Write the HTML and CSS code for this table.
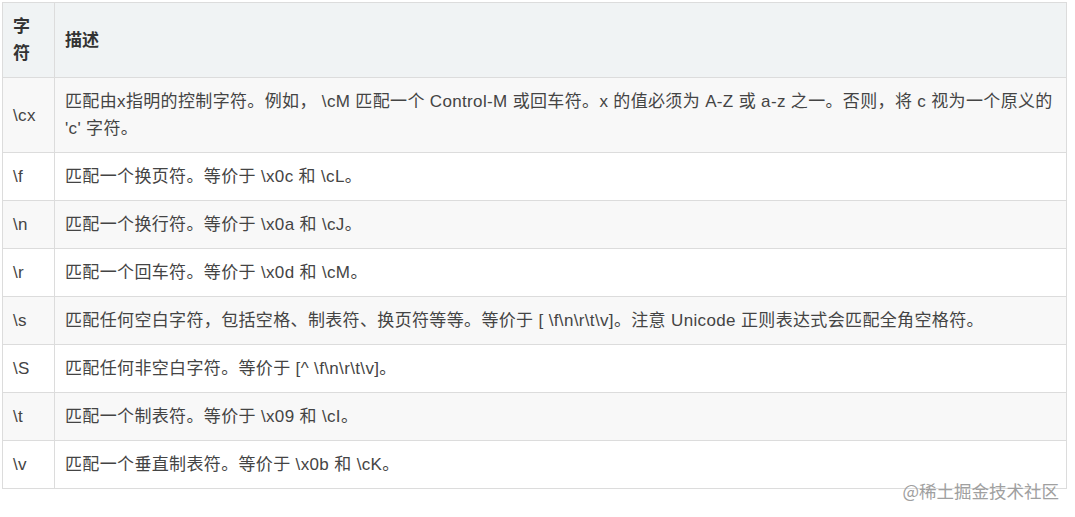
FILE: index.html
```html
<!DOCTYPE html>
<html lang="zh">
<head>
<meta charset="utf-8">
<link rel="stylesheet" href="styles.css">
</head>
<body>
<div class="wrap">
<table class="regex">
<thead>
<tr><th class="c1">字符</th><th>描述</th></tr>
</thead>
<tbody>
<tr><td class="c1">\cx</td><td>匹配由x指明的控制字符。例如， \cM 匹配一个 Control-M 或回车符。x 的值必须为 A-Z 或 a-z 之一。否则，将 c 视为一个原义的 'c' 字符。</td></tr>
<tr><td class="c1">\f</td><td>匹配一个换页符。等价于 \x0c 和 \cL。</td></tr>
<tr><td class="c1">\n</td><td>匹配一个换行符。等价于 \x0a 和 \cJ。</td></tr>
<tr><td class="c1">\r</td><td>匹配一个回车符。等价于 \x0d 和 \cM。</td></tr>
<tr><td class="c1">\s</td><td>匹配任何空白字符，包括空格、制表符、换页符等等。等价于 [ \f\n\r\t\v]。注意 Unicode 正则表达式会匹配全角空格符。</td></tr>
<tr><td class="c1">\S</td><td>匹配任何非空白字符。等价于 [^ \f\n\r\t\v]。</td></tr>
<tr><td class="c1">\t</td><td>匹配一个制表符。等价于 \x09 和 \cI。</td></tr>
<tr><td class="c1">\v</td><td>匹配一个垂直制表符。等价于 \x0b 和 \cK。</td></tr>
</tbody>
</table>
<div class="watermark">@稀土掘金技术社区</div>
</div>
</body>
</html>
```
FILE: styles.css
```css
html, body {
  margin: 0;
  padding: 0;
  background: #fff;
}
body {
  padding: 2px;
  font-family: "Liberation Sans", "Noto Sans CJK SC", sans-serif;
  font-size: 17px;
  color: #333;
}
.wrap {
  position: relative;
  width: 1065px;
  height: 513px;
}
.regex {
  border-collapse: collapse;
  width: 1065px;
  table-layout: fixed;
}
.regex th, .regex td {
  border: 1px solid #dcdcdc;
  padding: 10px 10px 10px 10px;
  line-height: 27px;
  text-align: left;
  vertical-align: middle;
}
.regex th {
  background: #f0f3f4;
  font-weight: bold;
  color: #333;
}
.regex .c1 {
  width: 31px;
}
.regex td {
  color: #444;
  letter-spacing: 0.35px;
}
.regex tbody tr:nth-child(odd) td {
  background: #f8f8f8;
}
.regex tbody tr:nth-child(even) td {
  background: #fff;
}
.watermark {
  position: absolute;
  right: 8px;
  top: 477px;
  font-size: 17.5px;
  color: #a0a0a0;
  font-family: "Noto Sans CJK SC", sans-serif;
  line-height: 24px;
}
```
